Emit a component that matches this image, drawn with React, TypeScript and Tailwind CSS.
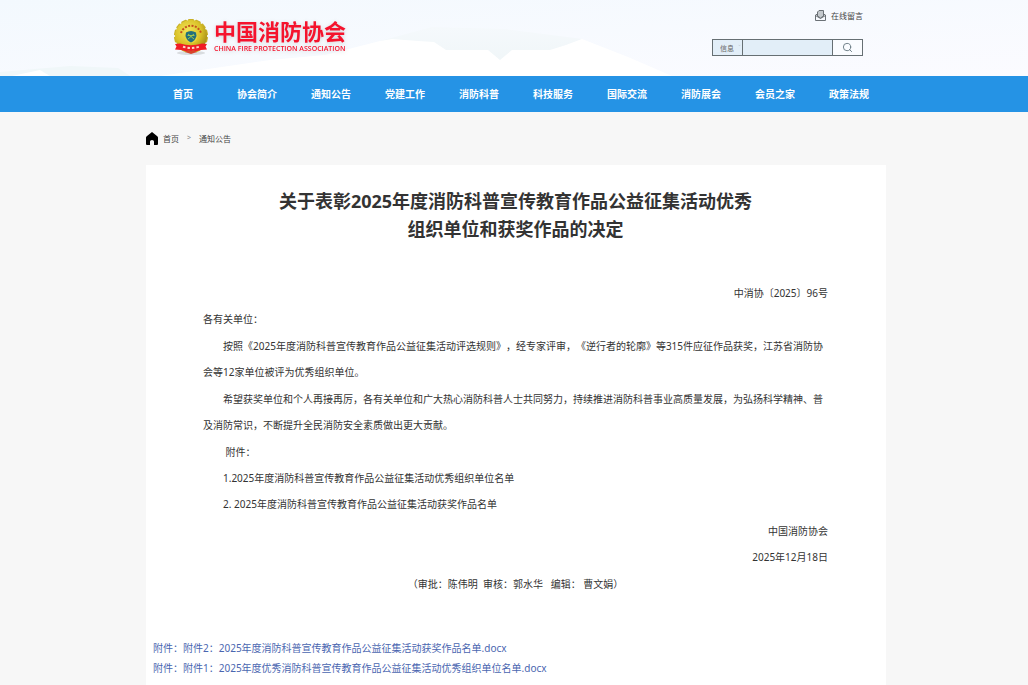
import { ChevronDown, Search } from "lucide-react";

const navItems = [
  "首页",
  "协会简介",
  "通知公告",
  "党建工作",
  "消防科普",
  "科技服务",
  "国际交流",
  "消防展会",
  "会员之家",
  "政策法规",
];

const attachments = [
  "附件2：2025年度消防科普宣传教育作品公益征集活动获奖作品名单.docx",
  "附件1：2025年度优秀消防科普宣传教育作品公益征集活动优秀组织单位名单.docx",
];

const teeth = Array.from({ length: 14 }, (_, i) => (i * 360) / 14);

function Mountains() {
  return (
    <svg
      className="absolute inset-0 h-full w-full"
      viewBox="0 0 1028 76"
      preserveAspectRatio="none"
      aria-hidden="true"
    >
      <defs>
        <linearGradient id="sky" x1="0" y1="0" x2="1" y2="1">
          <stop offset="0" stopColor="#f3f9fe" />
          <stop offset="1" stopColor="#fbfbff" />
        </linearGradient>
        <linearGradient id="ridge" x1="0" y1="0" x2="0" y2="1">
          <stop offset="0" stopColor="#f5f9fc" />
          <stop offset="1" stopColor="#f0f6f8" />
        </linearGradient>
      </defs>
      <rect width="1028" height="76" fill="url(#sky)" />
      <path d="M380 41L432 27L505 29L575 38L582 39L550 52L500 62L440 52Z" fill="url(#ridge)" />
      <path d="M0 72L70 66L118 68L130 76H0Z" fill="#f0f7f9" />
      <path d="M12 76L26 73L40 70L50 76Z" fill="#fff" />
      <path
        d="M160 76L270 60L325 55L380 41L392 39L418 41L434 42L446 50L488 50L500 60L512 50L550 50L566 45L582 39L628 57L672 76Z"
        fill="#fff"
      />
    </svg>
  );
}

function Emblem() {
  return (
    <svg width="36" height="38" viewBox="0 0 36 38" aria-hidden="true">
      <defs>
        <radialGradient id="gold" cx="0.4" cy="0.35" r="0.7">
          <stop offset="0" stopColor="#f4e65a" />
          <stop offset="0.6" stopColor="#d9c128" />
          <stop offset="1" stopColor="#9c8516" />
        </radialGradient>
      </defs>
      <ellipse cx="18" cy="35" rx="14" ry="2" fill="#d9dcdf" />
      {teeth.map((deg) => (
        <rect
          key={deg}
          x="15"
          y="1"
          width="6"
          height="5"
          rx="1"
          fill="#c9b128"
          transform={`rotate(${deg} 18 18)`}
        />
      ))}
      <circle cx="18" cy="18" r="16" fill="url(#gold)" />
      <path
        d="M8 15A10.500 10.500 0 0 1 28 15"
        fill="none"
        stroke="#c4501c"
        strokeWidth="2"
        strokeDasharray="2 1.4"
      />
      <circle cx="18" cy="18.500" r="6.500" fill="#e8d63c" />
      <path d="M13 14.500Q18 11.500 23 14.500L23.500 18Q22 23 18 24.500Q14 23 12.500 18Z" fill="#23707c" />
      <path d="M15 16L21 21M21 16L15 21M14.500 17.500H21.500" stroke="#a8c84c" strokeWidth="0.9" />
      <path
        d="M2 26L7 25.500Q18 29 29 25.500L34 26L32.500 28.500L34 31.500L28 32Q18 35 8 32L2 31.500L3.500 28.500Z"
        fill="#f01c26"
      />
      <path d="M10 28.800Q18 31 26 28.800" fill="none" stroke="#fbd9c8" strokeWidth="2" strokeDasharray="2.500 2" />
      <path d="M12 34L16 31.500L18 33.500L20 31.500L24 34L18 36Z" fill="#d8432a" />
    </svg>
  );
}

function MessageIcon() {
  return (
    <svg width="11" height="12" viewBox="0 0 11 12" fill="none" stroke="#6b7176" aria-hidden="true">
      <path d="M2.500 4L0.500 5V10.500H10.500V5L8.500 4" />
      <path d="M2.500 6V2L4 0.500H8.500V6L5.500 8Z" fill="#c4c9cd" />
      <path d="M0.500 5.500L5.500 8.500L10.500 5.500" />
    </svg>
  );
}

function Header() {
  return (
    <header className="relative h-[76px] pl-1">
      <Mountains />
      <div className="relative mx-auto flex w-full max-w-[740px] justify-between pr-[23px] pl-[27px]">
        <a href="#" className="flex items-start gap-[5px] pt-[18px] text-[#f5132d]">
          <Emblem />
          <span className="flex flex-col font-bold drop-shadow-sm">
            <span className="text-[22px] leading-[27px]">中国消防协会</span>
            <span className="font-['Open_Sans',sans-serif] text-[7px] leading-[8px] font-semibold whitespace-nowrap">
              CHINA FIRE PROTECTION ASSOCIATION
            </span>
          </span>
        </a>
        <div className="flex flex-col items-end pt-2.5">
          <a href="#" className="flex items-center gap-[5px] text-[8px] leading-[12px] text-[#444]">
            <MessageIcon />
            在线留言
          </a>
          <form
            className="mt-[17px] flex h-[17px] w-[151px] border border-[#666f73] bg-[#e2eef8]"
            onSubmit={(e) => e.preventDefault()}
          >
            <div className="relative w-[30px] border-r border-[#666f73]">
              <select
                aria-label="搜索类型"
                className="block h-full w-full appearance-none pt-0.5 pl-[7px] text-[7px] leading-[13px] text-[#666] outline-none"
              >
                <option>信息</option>
              </select>
              <ChevronDown size={3} className="absolute top-1 right-px text-[#999]" />
            </div>
            <input
              type="text"
              aria-label="关键词"
              className="min-w-0 flex-1 px-1 text-[8px] outline-none"
            />
            <button
              type="submit"
              aria-label="搜索"
              className="flex w-[30px] items-center justify-center border-l border-[#666f73] bg-[#fafcff]"
            >
              <Search size={11} strokeWidth={2} className="text-[#667780]" />
            </button>
          </form>
        </div>
      </div>
    </header>
  );
}

export default function App() {
  return (
    <div className="min-h-screen bg-[#f7f7f7] font-['Noto_Sans','Noto_Sans_CJK_SC',sans-serif] text-[10px] text-[#333] [text-spacing-trim:space-all]">
      <Header />

      <nav className="bg-[#2593e5] pl-1">
        <ul className="mx-auto grid w-full max-w-[740px] grid-cols-10">
          {navItems.map((item) => (
            <li key={item}>
              <a href="#" className="block text-center leading-[36px] font-bold text-white">
                {item}
              </a>
            </li>
          ))}
        </ul>
      </nav>

      <div className="pl-1">
        <div className="mx-auto w-full max-w-[740px]">
          <div className="flex h-[53px] items-center text-[8px] text-[#444]">
            <svg width="12" height="13" viewBox="0 0 12 13" aria-hidden="true">
              <path
                d="M6 0L11.300 4.200Q12 4.800 12 5.600V12Q12 13 11 13H8V9.500Q8 8 6 8Q4 8 4 9.500V13H1Q0 13 0 12V5.600Q0 4.800 0.700 4.200Z"
                fill="#000"
              />
            </svg>
            <a href="#" className="ml-[5px]">
              首页
            </a>
            <span className="mx-2 text-[7px] text-[#888]">&gt;</span>
            <a href="#">通知公告</a>
          </div>

          <main className="min-h-[520px] bg-white pt-[22px] pb-2">
            <article className="pr-[58px] pl-[57px]">
              <h1 className="text-center text-[18px] leading-[28px] font-bold">
                关于表彰2025年度消防科普宣传教育作品公益征集活动优秀
                <br />
                组织单位和获奖作品的决定
              </h1>

              <div className="mt-[37px] flex flex-col gap-px leading-[26px]">
                <div>
                  <p className="text-right">中消协〔2025〕96号</p>
                  <p>各有关单位：</p>
                </div>
                <p className="indent-5">
                  按照《2025年度消防科普宣传教育作品公益征集活动评选规则》，经专家评审，《逆行者的轮廓》等315件应征作品获奖，江苏省消防协会等12家单位被评为优秀组织单位。
                </p>
                <p className="indent-5">
                  希望获奖单位和个人再接再厉，各有关单位和广大热心消防科普人士共同努力，持续推进消防科普事业高质量发展，为弘扬科学精神、普及消防常识，不断提升全民消防安全素质做出更大贡献。
                </p>
                <div className="indent-5">
                  <p>&nbsp;附件：</p>
                  <p>1.2025年度消防科普宣传教育作品公益征集活动优秀组织单位名单</p>
                  <p>2. 2025年度消防科普宣传教育作品公益征集活动获奖作品名单</p>
                </div>
                <div className="text-right">
                  <p>中国消防协会</p>
                  <p>2025年12月18日</p>
                </div>
                <p className="text-center">
                  （审批：陈伟明&nbsp; 审核：郭水华&nbsp;&nbsp; 编辑： 曹文娟）
                </p>
              </div>
            </article>

            <ul className="mt-[41px] px-[7px] leading-[20px] text-[#4a66b0]">
              {attachments.map((name) => (
                <li key={name}>
                  附件：
                  <a href="#">{name}</a>
                </li>
              ))}
            </ul>
          </main>
        </div>
      </div>
    </div>
  );
}
